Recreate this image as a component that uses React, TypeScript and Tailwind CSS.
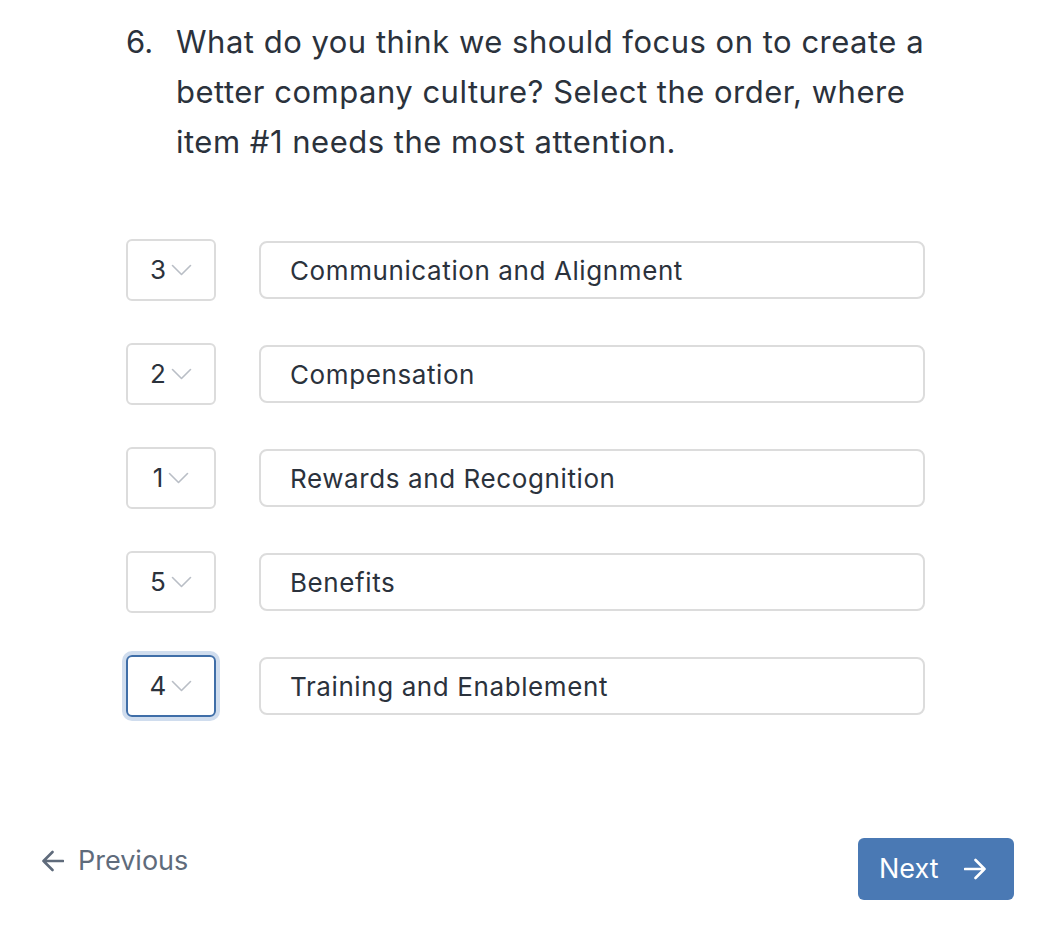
const items = [
  { rank: "3", label: "Communication and Alignment" },
  { rank: "2", label: "Compensation" },
  { rank: "1", label: "Rewards and Recognition" },
  { rank: "5", label: "Benefits" },
  { rank: "4", label: "Training and Enablement", focused: true },
];

function Chevron() {
  return (
    <svg width="21" height="12" viewBox="0 0 21 12" fill="none" className="text-[#b9bec6]">
      <path d="M1.5 1.5 L10.5 10.5 L19.5 1.5" stroke="currentColor" strokeWidth="1.6" strokeLinecap="round" strokeLinejoin="round" />
    </svg>
  );
}

function Arrow({ dir }: { dir: "left" | "right" }) {
  const d = dir === "left" ? "M21 11 H1.5 M10.5 2 L1.5 11 L10.5 20" : "M1 11 H20.5 M11.5 2 L20.5 11 L11.5 20";
  return (
    <svg width="22" height="22" viewBox="0 0 22 22" fill="none">
      <path d={d} stroke="currentColor" strokeWidth="2.6" strokeLinecap="round" strokeLinejoin="round" />
    </svg>
  );
}

export default function App() {
  return (
    <div
      className="relative h-[926px] w-[1046px] bg-white text-[#2b323c]"
      style={{ fontFamily: "Inter, 'Noto Sans', sans-serif" }}
    >
      <div className="pl-[126px] pt-[17px]">
        <h2 className="flex w-[820px] text-[31px] leading-[50px] tracking-[0.5px]">
          <span className="w-[50px] shrink-0 tracking-normal">6.</span>
          <span>
            What do you think we should focus on to create a better company culture? Select the order, where
            item #1 needs the most attention.
          </span>
        </h2>

        <ul className="mt-[72px] flex w-[800px] flex-col gap-[42px]">
          {items.map((it) => (
            <li key={it.label} className="flex items-center gap-[43px]">
              <div
                className={
                  it.focused
                    ? "flex h-[62px] w-[90px] shrink-0 items-center justify-center gap-[5px] rounded-[6px] border-2 border-[#3f6ea8] shadow-[0_0_0_4px_#d0ddee]"
                    : "flex h-[62px] w-[90px] shrink-0 items-center justify-center gap-[5px] rounded-[6px] border-2 border-[#dcdcdc]"
                }
              >
                <span className="text-[26px] leading-none">{it.rank}</span>
                <Chevron />
              </div>
              <div className="flex h-[58px] w-[666px] items-center rounded-[8px] border-2 border-[#dcdcdc] pl-[29px] text-[26px] tracking-[0.6px]">
                {it.label}
              </div>
            </li>
          ))}
        </ul>
      </div>

      <div className="mt-[121px] flex items-center justify-between pl-[42px] pr-[32px]">
        <button className="mb-[16px] flex items-center gap-[14px] text-[27px] text-[#5f6b7b]">
          <Arrow dir="left" />
          <span>Previous</span>
        </button>
        <button className="flex h-[62px] w-[156px] items-center gap-[25px] rounded-[6px] bg-[#4a79b4] pl-[21px] text-[27px] text-white">
          <span>Next</span>
          <Arrow dir="right" />
        </button>
      </div>
    </div>
  );
}
